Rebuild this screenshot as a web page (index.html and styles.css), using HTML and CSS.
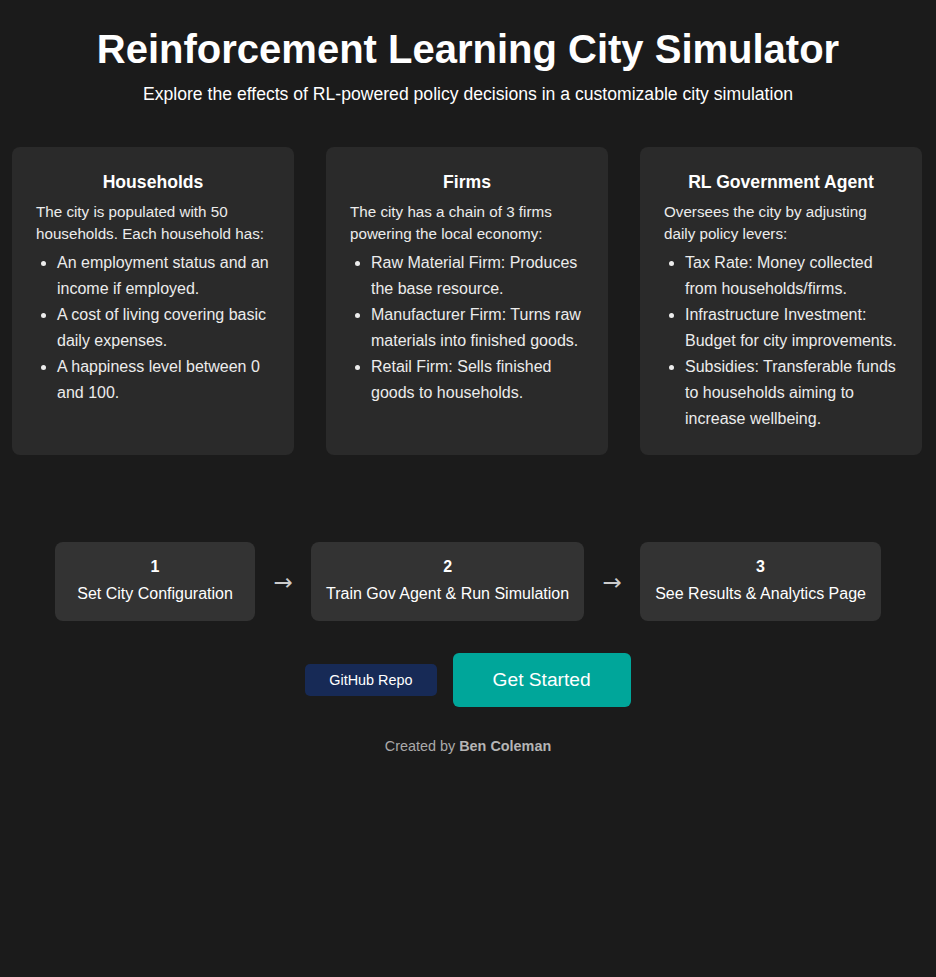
FILE: index.html
```html
<!DOCTYPE html>
<html lang="en">
<head>
<meta charset="utf-8">
<title>Reinforcement Learning City Simulator</title>
<link rel="stylesheet" href="styles.css">
</head>
<body>
<header class="hero">
  <h1 class="title">Reinforcement Learning City Simulator</h1>
  <p class="subtitle">Explore the effects of RL-powered policy decisions in a customizable city simulation</p>
</header>

<section class="cards">
  <div class="card">
    <h3 class="card-title">Households</h3>
    <p class="card-text">The city is populated with 50 households. Each household has:</p>
    <ul class="card-list">
      <li>An employment status and an income if employed.</li>
      <li>A cost of living covering basic daily expenses.</li>
      <li>A happiness level between 0 and 100.</li>
    </ul>
  </div>
  <div class="card">
    <h3 class="card-title">Firms</h3>
    <p class="card-text">The city has a chain of 3 firms powering the local economy:</p>
    <ul class="card-list">
      <li>Raw Material Firm: Produces the base resource.</li>
      <li>Manufacturer Firm: Turns raw materials into finished goods.</li>
      <li>Retail Firm: Sells finished goods to households.</li>
    </ul>
  </div>
  <div class="card">
    <h3 class="card-title">RL Government Agent</h3>
    <p class="card-text">Oversees the city by adjusting daily policy levers:</p>
    <ul class="card-list">
      <li>Tax Rate: Money collected from households/firms.</li>
      <li>Infrastructure Investment: Budget for city improvements.</li>
      <li>Subsidies: Transferable funds to households aiming to increase wellbeing.</li>
    </ul>
  </div>
</section>

<section class="steps">
  <div class="step">
    <div class="step-num">1</div>
    <div class="step-text">Set City Configuration</div>
  </div>
  <div class="arrow">&#8594;</div>
  <div class="step">
    <div class="step-num">2</div>
    <div class="step-text">Train Gov Agent &amp; Run Simulation</div>
  </div>
  <div class="arrow">&#8594;</div>
  <div class="step">
    <div class="step-num">3</div>
    <div class="step-text">See Results &amp; Analytics Page</div>
  </div>
</section>

<div class="actions">
  <a class="btn btn-github" href="#">GitHub Repo</a>
  <a class="btn btn-start" href="#">Get Started</a>
</div>

<footer class="footer">Created by <strong>Ben Coleman</strong></footer>
</body>
</html>
```

FILE: styles.css
```css
* { box-sizing: border-box; }
html, body { margin: 0; padding: 0; }
body {
  background: #1b1b1b;
  color: #ffffff;
  font-family: "Liberation Sans", Arial, Helvetica, sans-serif;
  min-height: 977px;
}
.hero {
  text-align: center;
  padding-top: 26px;
}
.title {
  margin: 0;
  font-size: 40px;
  line-height: 46px;
  font-weight: bold;
}
.subtitle {
  margin: 12px 0 0;
  font-size: 17.6px;
  line-height: 20px;
}
.cards {
  display: flex;
  gap: 32px;
  padding: 0 14px 0 12px;
  margin-top: 43px;
}
.card {
  flex: 1;
  background: #2a2a2a;
  border-radius: 8px;
  padding: 25px 24px 23px;
}
.card-title {
  margin: 0;
  text-align: center;
  font-size: 17.6px;
  line-height: 20px;
  font-weight: bold;
}
.card-text {
  margin: 9px 0 0;
  font-size: 15.2px;
  line-height: 22px;
  color: #ececec;
}
.card-list {
  margin: 5px 0 0;
  padding-left: 21px;
  font-size: 16px;
  line-height: 26px;
  color: #ececec;
}
.steps {
  display: flex;
  justify-content: center;
  align-items: center;
  gap: 17px;
  margin-top: 87px;
}
.step {
  min-width: 200px;
  background: #333333;
  border-radius: 8px;
  padding: 14px 15px 16px;
  text-align: center;
  font-size: 16px;
  line-height: 22px;
}
.step-num {
  font-weight: bold;
  margin-bottom: 5px;
}
.arrow {
  width: 22px;
  text-align: center;
  font-family: "DejaVu Sans", sans-serif;
  font-size: 23px;
  color: #cccccc;
  line-height: 24px;
}
.actions {
  display: flex;
  justify-content: center;
  align-items: center;
  gap: 16px;
  margin-top: 32px;
}
.btn {
  text-decoration: none;
  color: #ffffff;
  display: inline-block;
  text-align: center;
}
.btn-github {
  background: #172a56;
  border-radius: 5px;
  font-size: 14.4px;
  line-height: 32px;
  padding: 0 24px;
}
.btn-start {
  background: #00a69a;
  border-radius: 6px;
  font-size: 19.2px;
  line-height: 54px;
  padding: 0 40px;
}
.footer {
  text-align: center;
  margin-top: 31px;
  font-size: 14.4px;
  color: #aaaaaa;
}
.footer strong { color: #b5b5b5; }
```
